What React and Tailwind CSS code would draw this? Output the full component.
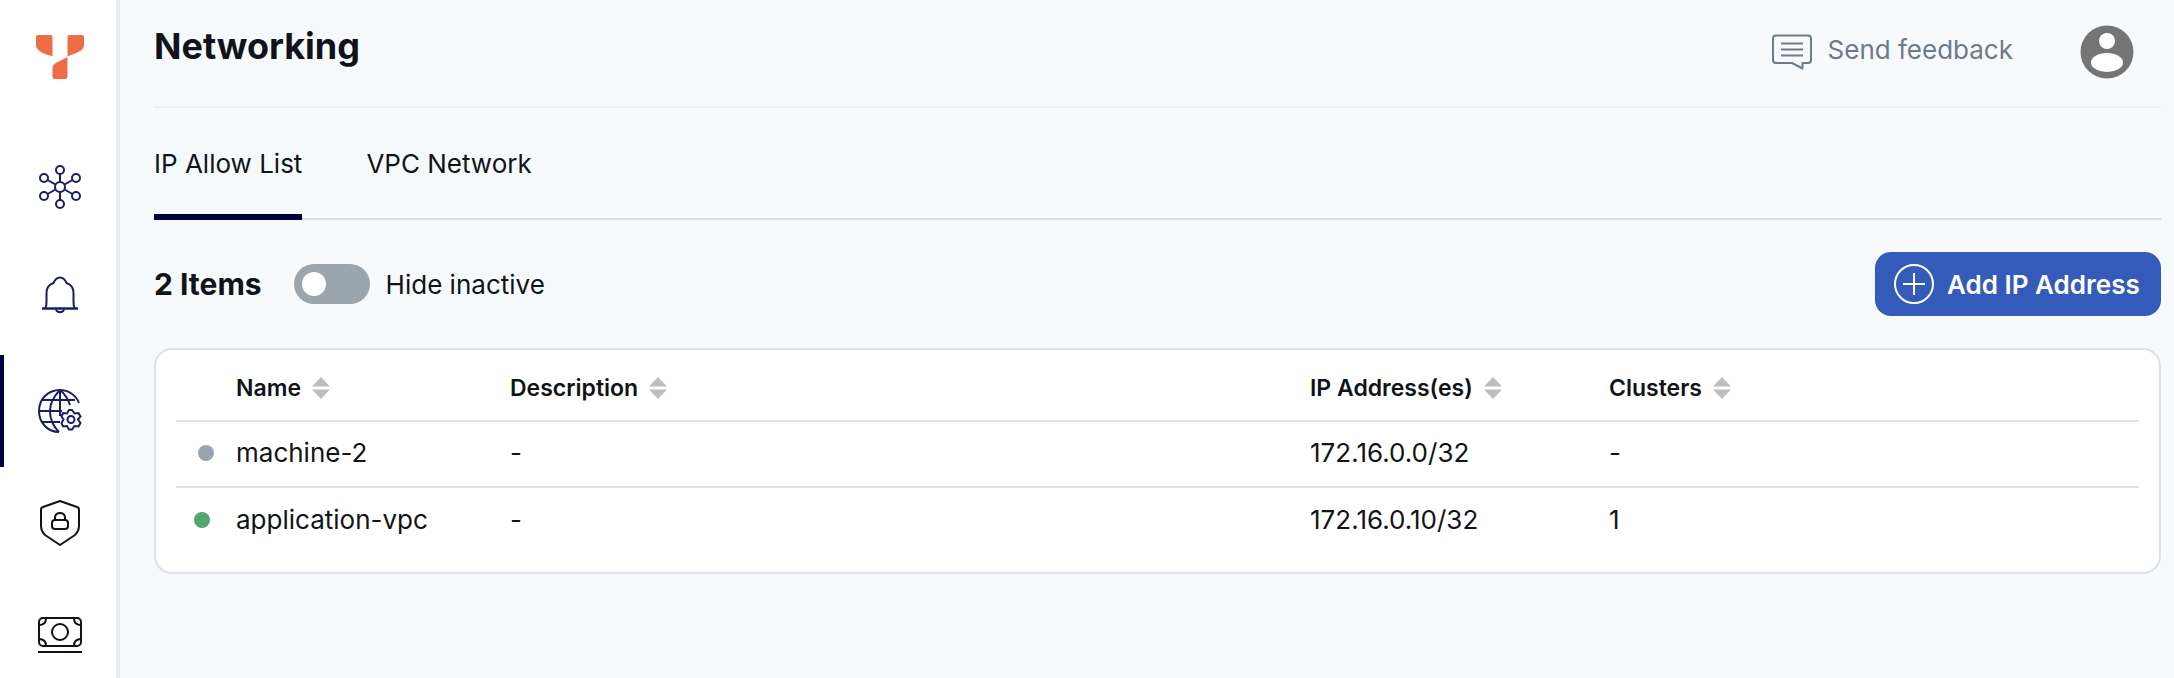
import { useState } from "react";

const navy = "#1a1f5e";

function Logo() {
  return (
    <svg width="48" height="44" viewBox="0 0 48 44" fill="#ef6c49">
      <path d="M2 0H14.500Q16.500 0 16.500 2V21Q16.500 21 14 20.500Q6 18.500 2.500 15Q0 13 0 10V2Q0 0 2 0Z" />
      <path d="M33.500 0H46Q48 0 48 2V10Q48 13 45.500 15Q42 17.500 34 20.500Q31.500 21.500 31.500 21.500V2Q31.500 0 33.500 0Z" />
      <path d="M31.500 22V41Q31.500 44 29 44H18.500Q16.500 44 16.500 41V33Q16.500 30 19 28.500Q23 26 31.500 22Z" />
    </svg>
  );
}

function ClusterIcon() {
  const nodes = [
    [21, 6],
    [37, 14],
    [37, 32],
    [21, 40],
    [5, 32],
    [5, 14],
  ];
  return (
    <svg width="42" height="46" viewBox="0 0 42 46" fill="none" stroke={navy} strokeWidth="2">
      {nodes.map(([x, y]) => (
        <g key={`${x}-${y}`}>
          <line x1="21" y1="23" x2={x} y2={y} />
          <circle cx={x} cy={y} r="4" fill="white" />
        </g>
      ))}
      <circle cx="21" cy="23" r="5" fill="white" />
    </svg>
  );
}

function BellIcon() {
  return (
    <svg width="38" height="38" viewBox="0 0 38 38" fill="none" stroke={navy} strokeWidth="2">
      <path d="M4.500 32C5.500 30 5.500 28 5.500 26V17C5.500 11.500 8 8.500 12.500 7C14 3.500 16.500 1.500 19 1.500C21.500 1.500 24 3.500 25.500 7C30 8.500 32.500 11.500 32.500 17V26C32.500 28 32.500 30 33.500 32" />
      <path d="M1 32.500H37" strokeWidth="2.500" />
      <path d="M15 33.500C16 37 22 37 23 33.500" />
    </svg>
  );
}

function GlobeIcon() {
  return (
    <svg width="46" height="46" viewBox="0 0 46 46" fill="none" stroke={navy} strokeWidth="2">
      <path d="M42 15C39 7 31 2 23 2C11 2 2 11 2 23C2 35 11 44 22 44" />
      <path d="M23 2C17 8 13 15 13 23C13 31 17 39 22 44" />
      <path d="M23 2C28 6 31 11 33 17" />
      <path d="M23 2V28" />
      <path d="M5 12H38" />
      <path d="M2 23H25" />
      <path d="M5 34H23" />
      <path d="M35 22L37.500 25.500L41.500 25L43.500 28.500L41 31.500L43.500 35L41.500 38.500L37.500 38L35 41.500H32L30 38L26 38.500L24.500 35L26.500 31.500L24.500 28.500L26 25L30 25.500L32 22Z" fill="white" />
      <circle cx="34" cy="31.500" r="3.500" />
    </svg>
  );
}

function ShieldIcon() {
  return (
    <svg width="40" height="46" viewBox="0 0 40 46" fill="none" stroke="#101418" strokeWidth="2">
      <path d="M20 1L37 7Q39 7.500 39 10V26Q39 31 35 35L20 45L5 35Q1 31 1 26V10Q1 7.500 3 7Z" strokeLinejoin="round" />
      <rect x="12" y="20" width="16" height="9" rx="3" />
      <path d="M15 20V17.500C15 11.500 25 11.500 25 17.500V20" />
    </svg>
  );
}

function MoneyIcon() {
  return (
    <svg width="44" height="36" viewBox="0 0 44 36" fill="none" stroke="#101418" strokeWidth="2">
      <rect x="1" y="1" width="42" height="28" rx="4" />
      <circle cx="22" cy="15" r="8" />
      <path d="M1 8C5 8 8 6 8 1" />
      <path d="M36 1C36 6 39 8 43 8" />
      <path d="M1 22C5 22 8 24 8 29" />
      <path d="M36 29C36 24 39 22 43 22" />
      <path d="M0 35H44" />
    </svg>
  );
}

function FeedbackIcon() {
  return (
    <svg width="40" height="36" viewBox="0 0 40 36" fill="none" stroke="#6c7b8a" strokeWidth="2">
      <path d="M4 1.500H36Q39 1.500 39 4.500V26Q39 29 36 29H30.500V34.500L20 29H4Q1 29 1 26V4.500Q1 1.500 4 1.500Z" strokeLinejoin="round" />
      <path d="M9 9.500H31M9 15.500H31M9 21.500H31" />
    </svg>
  );
}

function UserIcon() {
  return (
    <svg width="54" height="54" viewBox="0 0 54 54">
      <circle cx="27" cy="27" r="26.500" fill="#757575" />
      <circle cx="27" cy="16" r="8" fill="white" />
      <ellipse cx="27" cy="37.500" rx="16" ry="9.500" fill="white" />
    </svg>
  );
}

function SortArrows() {
  return (
    <svg width="18" height="22" viewBox="0 0 18 22" fill="#bdbdbd" className="ml-[11px] shrink-0">
      <path d="M9 0L18 9.500H0Z" />
      <path d="M0 12.500H18L9 22Z" />
    </svg>
  );
}

const navItems = [
  { icon: <ClusterIcon />, height: "h-[108px]" },
  { icon: <BellIcon />, height: "h-[108px] mb-[6px]" },
  { icon: <GlobeIcon />, height: "h-[112px]", active: true },
  { icon: <ShieldIcon />, height: "h-[112px]" },
  { icon: <MoneyIcon />, height: "h-[112px]" },
];

const rows = [
  { name: "machine-2", description: "-", ip: "172.16.0.0/32", clusters: "-", dot: "bg-[#9aa5b1]", offset: "ml-[22px]" },
  { name: "application-vpc", description: "-", ip: "172.16.0.10/32", clusters: "1", dot: "bg-[#4fa76f]", offset: "ml-[18px]" },
];

const columns = "grid grid-cols-[60px_274px_800px_299px_1fr]";

export default function App() {
  const [hideInactive, setHideInactive] = useState(false);

  return (
    <div
      className="flex h-[678px] w-[2174px] overflow-hidden bg-[#f7fafd] text-[#101418]"
      style={{ fontFamily: "Inter, 'Noto Sans', sans-serif" }}
    >
      <aside className="flex w-[120px] shrink-0 flex-col items-stretch border-r-4 border-[#e9ecf1] bg-white">
        <div className="flex h-[133px] shrink-0 items-start justify-center pt-[35px] pl-[4px]">
          <Logo />
        </div>
        <nav className="flex flex-col">
          {navItems.map((item, i) => (
            <div
              key={i}
              className={`flex ${item.height} shrink-0 items-center justify-center border-l-4 ${item.active ? "border-[#000041]" : "border-transparent"}`}
            >
              {item.icon}
            </div>
          ))}
        </nav>
      </aside>

      <main className="flex min-w-0 flex-1 flex-col pl-[34px] pr-[13px]">
        <header className="flex h-[108px] shrink-0 items-start justify-between border-b-2 border-[#edf0f4]">
          <h1 className="mt-[24px] text-[36px] leading-[44px] font-bold">Networking</h1>
          <div className="mt-[25px] flex items-center">
            <FeedbackIcon />
            <span className="ml-[16px] -translate-y-[2px] text-[26px] leading-[50px] text-[#6c7b8a]">Send feedback</span>
            <div className="ml-[67px] mr-[27px]">
              <UserIcon />
            </div>
          </div>
        </header>

        <div className="flex h-[112px] shrink-0 items-start gap-[64px] border-b-2 border-[#d9dee6]">
          <button className="flex h-[112px] items-start border-b-[6px] border-[#000041] pt-[33px] text-[26px] leading-[46px]">
            IP Allow List
          </button>
          <button className="flex h-[110px] items-start pt-[33px] text-[26px] leading-[46px]">
            VPC Network
          </button>
        </div>

        <div className="mt-[32px] mb-[32px] flex h-[64px] shrink-0 items-center">
          <span className="text-[30px] font-bold">2 Items</span>
          <button
            onClick={() => setHideInactive(!hideInactive)}
            className="ml-[32px] flex h-[40px] w-[76px] items-center rounded-full bg-[#9aa5ad] pl-[8px]"
            aria-label="Hide inactive"
          >
            <span className={`h-[24px] w-[24px] rounded-full bg-white ${hideInactive ? "ml-[28px]" : ""}`} />
          </button>
          <span className="ml-[16px] text-[26px]">Hide inactive</span>
          <button className="ml-auto flex h-[64px] w-[286px] items-center rounded-[16px] bg-[#345bb9] pl-[19px] text-white">
            <svg width="40" height="40" viewBox="0 0 40 40" fill="none" stroke="white" strokeWidth="2">
              <circle cx="20" cy="20" r="19" />
              <path d="M20 9V31M9 20H31" />
            </svg>
            <span className="ml-[13px] text-[26px] font-semibold">Add IP Address</span>
          </button>
        </div>

        <section className="h-[226px] shrink-0 rounded-[18px] border-2 border-[#dde2e9] bg-white px-[20px]">
          <div className={`${columns} h-[72px] items-center border-b-2 border-[#dde2e9] pt-[6px] text-[23px] font-semibold`}>
            <div />
            {["Name", "Description", "IP Address(es)", "Clusters"].map((label) => (
              <div key={label} className="flex items-center">
                {label}
                <SortArrows />
              </div>
            ))}
          </div>
          {rows.map((row, i) => (
            <div
              key={row.name}
              className={`${columns} h-[66px] items-center pb-[3px] text-[26px] ${i === 0 ? "border-b-2 border-[#dde2e9]" : ""}`}
            >
              <div className={`h-[16px] w-[16px] rounded-full ${row.dot} ${row.offset}`} />
              <div>{row.name}</div>
              <div>{row.description}</div>
              <div>{row.ip}</div>
              <div>{row.clusters}</div>
            </div>
          ))}
        </section>
      </main>
    </div>
  );
}
